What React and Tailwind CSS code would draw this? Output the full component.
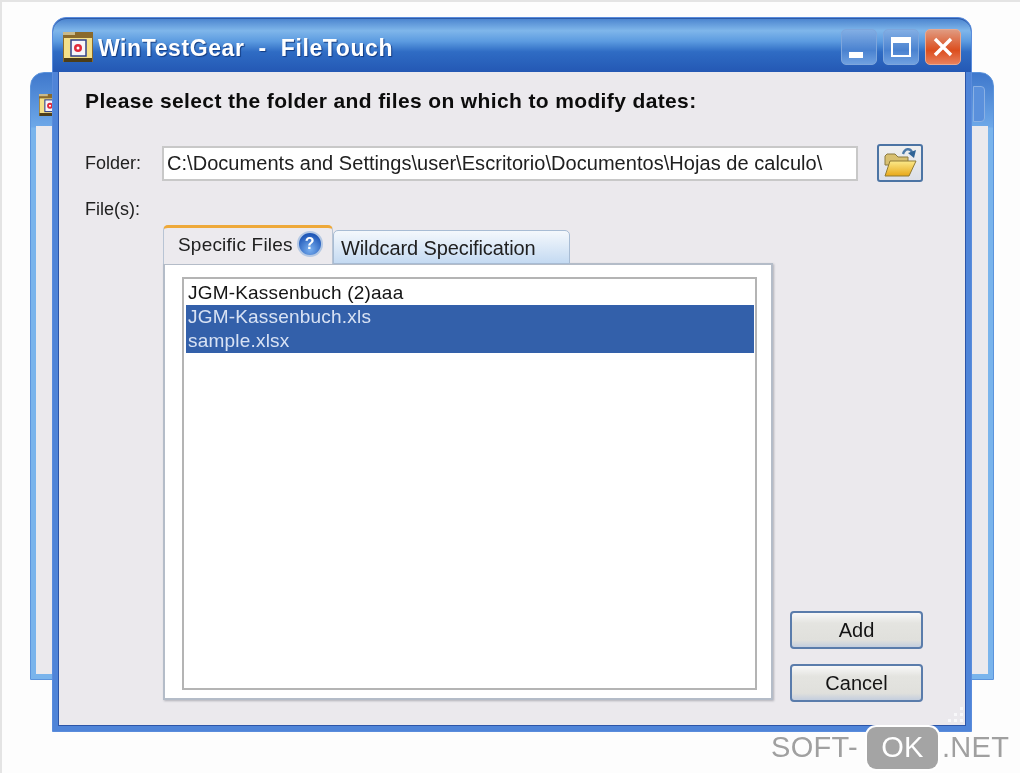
const font = { fontFamily: '"Liberation Sans", Arial, sans-serif' };

const AppIcon = ({ className }) => (
  <svg viewBox="0 0 30 30" className={className}>
    <rect x="0" y="0" width="30" height="30" fill="#8a6a2c" />
    <rect x="0" y="0" width="12" height="3" fill="#c9b98a" />
    <rect x="1" y="6" width="28" height="20" fill="#f4e08a" />
    <rect x="1" y="26" width="28" height="4" fill="#4d3d18" />
    <rect x="8" y="8" width="15" height="16" fill="#f6f6fa" stroke="#30408a" strokeWidth="1.5" />
    <circle cx="15" cy="16" r="4" fill="#e02a3a" />
    <circle cx="15" cy="16" r="1.5" fill="#fff" />
  </svg>
);

const FolderIcon = () => (
  <svg viewBox="0 0 34 32" className="w-[34px] h-[32px]">
    <defs>
      <linearGradient id="folderFront" x1="0" y1="0" x2="0" y2="1">
        <stop offset="0" stopColor="#fbe98a" />
        <stop offset="1" stopColor="#e8a818" />
      </linearGradient>
    </defs>
    <path d="M2 9 L4 7 h8 l3 3 h10 v8 H2z" fill="#d8c070" stroke="#8a7a40" />
    <path d="M2 29 L7 14 H33 L26 29z" fill="url(#folderFront)" stroke="#8f7a34" />
    <path d="M20 7 C22 1 27 1 29 5" fill="none" stroke="#4c7aa8" strokeWidth="2.4" />
    <path d="M25 6 L33 3 L31 11z" fill="#2f6496" />
  </svg>
);

const HelpIcon = () => (
  <div className="w-[26px] h-[26px] rounded-full bg-[radial-gradient(circle_at_50%_75%,#7ab0f0,#2058b8_75%)] border-2 border-[#b4c8e4] flex items-center justify-center text-white text-[16px] font-bold leading-none">
    ?
  </div>
);

const CaptionButton = ({ className, children }) => (
  <div className={`w-[36px] h-[36px] rounded-[5px] border border-[#7ea6dc] flex items-center justify-center relative ${className}`}>
    {children}
  </div>
);

const TitleBar = () => (
  <div className="-mx-[5px] h-[54px] shrink-0 flex items-center pl-[10px] pr-[10px] bg-[linear-gradient(to_bottom,#4d86d0_0%,#7fb6ea_22%,#5c9be0_42%,#2f6cc4_62%,#2458b4_100%)] border-t border-[#2c5aa8] rounded-t-[14px]">
    <AppIcon className="w-[30px] h-[30px] mt-[3px]" />
    <span className="ml-[5px] mt-[5px] text-white font-bold text-[23px] tracking-[0.6px] [text-shadow:1px_1px_1px_#123a80] whitespace-pre">
      WinTestGear  -  FileTouch
    </span>
    <div className="ml-auto flex gap-[6px] mt-[3px]">
      <CaptionButton className="bg-[linear-gradient(to_bottom,#82aee4,#4a82d0_60%,#6fa0e0)]">
        <div className="absolute left-[7px] bottom-[6px] w-[14px] h-[6px] bg-white" />
      </CaptionButton>
      <CaptionButton className="bg-[linear-gradient(to_bottom,#82aee4,#4a82d0_60%,#6fa0e0)]">
        <div className="w-[20px] h-[20px] border-2 border-t-[6px] border-white" />
      </CaptionButton>
      <CaptionButton className="bg-[linear-gradient(to_bottom,#e09a80,#dc4e1e_60%,#e8805c)] border-[#e8a890]">
        <svg viewBox="0 0 24 24" className="w-[24px] h-[24px]">
          <path d="M4 4 L20 20 M20 4 L4 20" stroke="#fff" strokeWidth="3.4" />
        </svg>
      </CaptionButton>
    </div>
  </div>
);

const FileList = () => (
  <div className="flex-1 ml-[17px] mr-[14px] mt-[12px] mb-[8px] bg-white border-2 border-[#b4b4b4] pt-[2px] pl-[2px] pr-[1px] text-[19px] tracking-[0.2px] leading-[24px] text-[#141414]">
    <div className="pl-[2px] h-[24px]">JGM-Kassenbuch (2)aaa</div>
    <div className="pl-[2px] h-[24px] bg-[#3360aa] text-[#d8e2f4]">JGM-Kassenbuch.xls</div>
    <div className="pl-[2px] h-[24px] bg-[#3360aa] text-[#d8e2f4]">sample.xlsx</div>
  </div>
);

const Tabs = () => (
  <div className="w-[610px] h-[475px] flex flex-col">
    <div className="flex items-end h-[38px] relative z-10">
      <div className="w-[170px] h-[39px] -mb-[1px] bg-[#eceaee] border-x border-[#b8c4d4] border-t-[3px] border-t-[#eea93a] rounded-t-[5px] flex items-start pt-[3px] pl-[14px] text-[19px] tracking-[0.2px] text-[#202020] gap-[4px]">
        <span>Specific Files</span>
        <HelpIcon />
      </div>
      <div className="w-[237px] h-[34px] -mb-[1px] bg-[linear-gradient(to_bottom,#f4f8fc,#c4daf2)] border border-[#a8bcd4] rounded-t-[5px] pl-[7px] pt-[2px] text-[20px] tracking-[-0.1px] text-[#202020]">
        Wildcard Specification
      </div>
    </div>
    <div className="flex-1 flex flex-col bg-white border-2 border-[#b4bcc8] shadow-[1px_1px_2px_#b0b0b8]">
      <FileList />
    </div>
  </div>
);

const DialogButton = ({ children }) => (
  <button className="w-[133px] h-[38px] rounded-[4px] border-2 border-[#5a7cab] bg-[linear-gradient(to_bottom,#f8f8f8,#e4e4e0_30%,#e0e0dc_80%,#c4cede)] text-[20px] text-[#141414]">
    {children}
  </button>
);

const ResizeGrip = () => (
  <svg viewBox="0 0 20 20" className="absolute right-[1px] bottom-[1px] w-[20px] h-[20px]">
    <path d="M16 3h3v3h-3z M10 9h3v3h-3z M16 9h3v3h-3z M4 15h3v3H4z M10 15h3v3h-3z M16 15h3v3h-3z" fill="#f8f8fa" />
  </svg>
);

const Client = () => (
  <div className="relative flex-1 flex flex-col bg-[#ebe9ed] border-x border-b border-[#2c55a8] pl-[26px] pr-[42px] pt-[17px] pb-[25px]">
    <div className="font-bold text-[21px] leading-[24px] tracking-[0.37px] text-[#0c0c0c] whitespace-nowrap">
      Please select the folder and files on which to modify dates:
    </div>
    <div className="flex items-center mt-[31px] h-[38px]">
      <span className="w-[77px] text-[18px] text-[#202020]">Folder:</span>
      <div className="w-[696px] h-[35px] bg-white border-2 border-[#c8c8c8] pl-[3px] text-[20px] tracking-[0.04px] leading-[31px] text-[#202020] whitespace-nowrap overflow-hidden">
        C:\Documents and Settings\user\Escritorio\Documentos\Hojas de calculo\
      </div>
      <div className="ml-auto w-[46px] h-[38px] rounded-[3px] border-2 border-[#4c74a4] bg-[linear-gradient(to_bottom,#f0f0f0,#dcdfe8)] flex items-center justify-center">
        <FolderIcon />
      </div>
    </div>
    <div className="mt-[15px] text-[18px] leading-[24px] text-[#202020]">File(s):</div>
    <div className="flex-1 flex items-end">
      <div className="ml-[78px]">
        <Tabs />
      </div>
      <div className="ml-auto flex flex-col gap-[15px] -mb-[2px]">
        <DialogButton>Add</DialogButton>
        <DialogButton>Cancel</DialogButton>
      </div>
    </div>
    <ResizeGrip />
  </div>
);

const BackWindow = () => (
  <div className="absolute left-[28px] top-[70px] w-[964px] h-[608px] rounded-t-[14px] bg-[linear-gradient(to_bottom,#3f78cc,#6ea8e8_54px,#7ab4ec_55px)] border border-[#5c94dc] p-[5px] pt-[53px]">
    <div className="w-full h-full bg-[#ebe9ed]" />
    <AppIcon className="absolute left-[8px] top-[17px] w-[22px] h-[30px]" />
    <div className="absolute right-[8px] top-[13px] w-[12px] h-[36px] rounded-r-[4px] bg-[#5a90dc] border border-[#8ab0e4]" />
  </div>
);

const Watermark = () => (
  <div className="absolute left-[769px] top-[725px] h-[42px] flex items-center text-[29px] text-[#a0a0a0] tracking-[0.3px]">
    <span>SOFT-</span>
    <span className="ml-[9px] w-[71px] h-[42px] rounded-[9px] bg-[#a4a4a4] shadow-[0_0_0_2px_#fff] text-white flex items-center justify-center">OK</span>
    <span className="ml-[4px]">.NET</span>
  </div>
);

export default function App() {
  return (
    <div style={font} className="relative w-[1020px] h-[773px] overflow-hidden bg-[#fdfdfd] border-t-2 border-l-2 border-[#e4e4e4] blur-[0.5px]">
      <BackWindow />
      <div className="absolute left-[50px] top-[15px] w-[920px] h-[715px] flex flex-col rounded-t-[14px] bg-[#4f84d8] px-[5px] pb-[5px] border border-[#5a8cdc]">
        <TitleBar />
        <Client />
      </div>
      <Watermark />
    </div>
  );
}
